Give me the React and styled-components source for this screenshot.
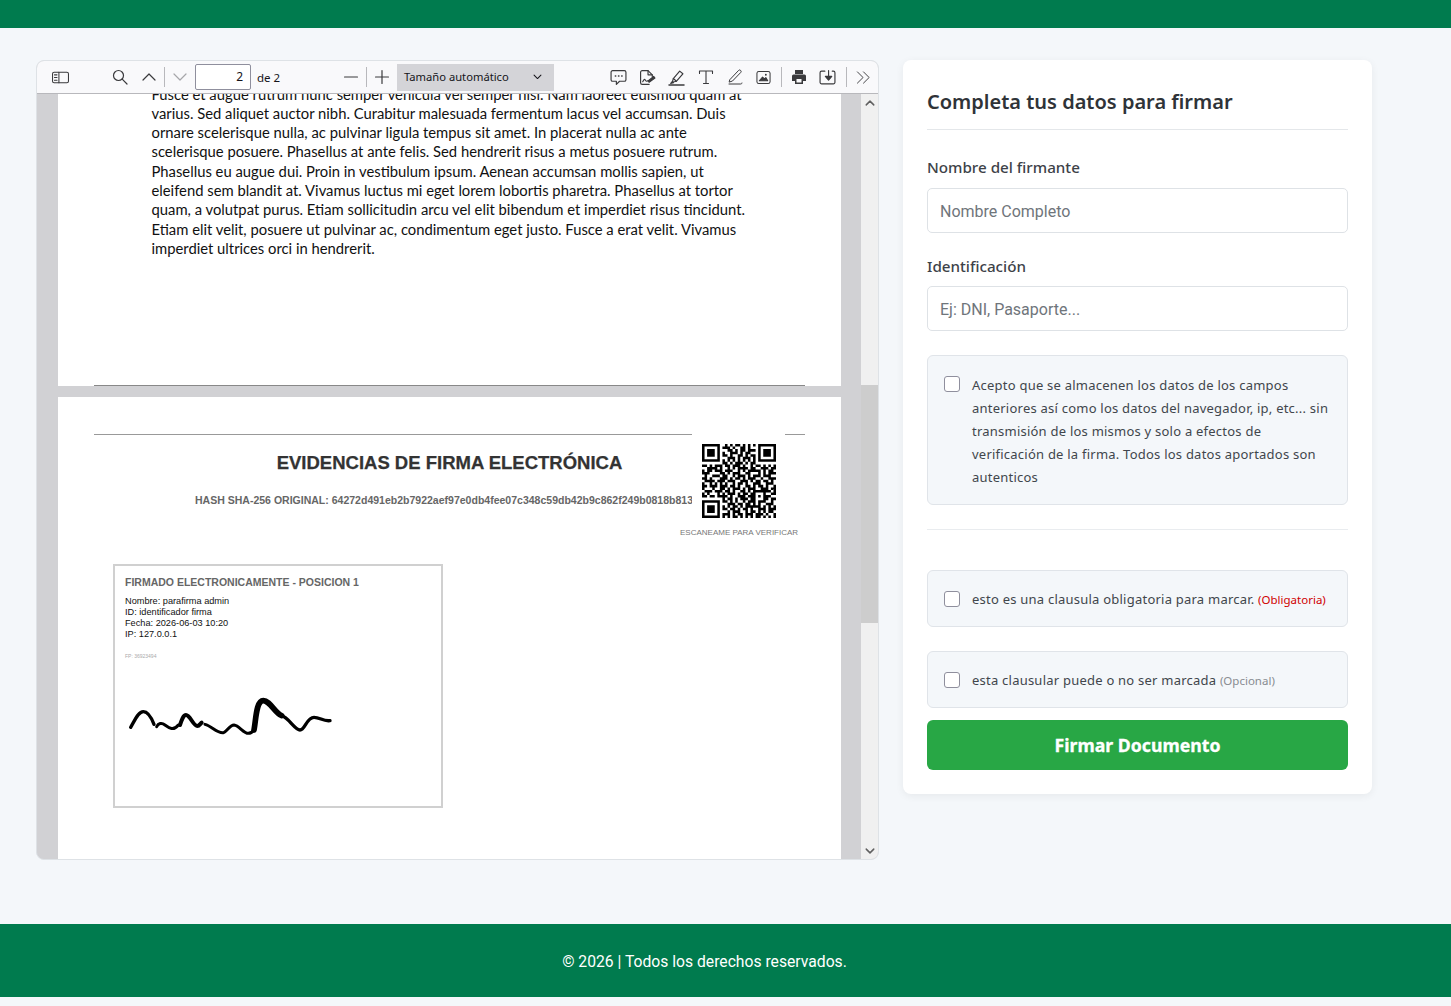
import React from 'react';
import styled, { createGlobalStyle } from 'styled-components';

const GlobalStyle = createGlobalStyle`
  html, body { margin: 0; padding: 0; background: #f4f7fa; }
  body { font-family: "Noto Sans", "Open Sans", sans-serif; color: #333; }
  * { box-sizing: border-box; }
`;

const TopBar = styled.header`
  height: 28px;
  background: #007b4e;
`;

const Main = styled.main`
  display: flex;
  align-items: flex-start;
  gap: 24px;
  padding: 32px 36px 64px;
`;

const Viewer = styled.section`
  width: 843px;
  height: 800px;
  display: flex;
  flex-direction: column;
  border: 1px solid #dee2e6;
  border-radius: 8px;
  overflow: hidden;
  background: #d1d1d4;
`;

const Toolbar = styled.div`
  height: 33px;
  flex: none;
  display: flex;
  align-items: center;
  padding-left: 9px;
  background: #f9f9fb;
  border-bottom: 1px solid #b8b8bc;
  color: #3a3a3d;
`;

const ToolButton = styled.button`
  width: 29px;
  height: 26px;
  flex: none;
  display: flex;
  align-items: center;
  justify-content: center;
  padding: 0;
  margin-left: ${({ $gap }) => $gap || 0}px;
  border: 0;
  background: none;
  color: ${({ $off }) => ($off ? '#a6a6aa' : '#3a3a3d')};
`;

const ToolSep = styled.span`
  width: 1px;
  height: 20px;
  flex: none;
  margin: 0 ${({ $mr }) => $mr || 0}px 0 ${({ $ml }) => $ml || 0}px;
  background: #b8b8bc;
`;

const PageInput = styled.div`
  width: 56px;
  height: 26px;
  flex: none;
  margin-left: 1px;
  padding-right: 7px;
  border: 1px solid #8f8f9d;
  border-radius: 2px;
  background: #fff;
  font-size: 12px;
  line-height: 24px;
  text-align: right;
  color: #15141a;
`;

const PageCount = styled.span`
  margin: 0 55px 0 6px;
  width: 24px;
  flex: none;
  font-size: 11.5px;
  white-space: nowrap;
  color: #15141a;
`;

const ZoomSelect = styled.div`
  width: 157px;
  height: 27px;
  flex: none;
  display: flex;
  align-items: center;
  justify-content: space-between;
  padding: 0 11px 1px 7px;
  margin: 0 50px 0 1px;
  background: #d4d4d8;
  font-size: 11.2px;
  white-space: nowrap;
  color: #15141a;
`;

const ViewerBody = styled.div`
  flex: 1;
  min-height: 0;
  display: flex;
`;

const DocScroll = styled.div`
  flex: 1;
  min-width: 0;
  padding-left: 21px;
  overflow: hidden;
`;

const Page = styled.div`
  position: relative;
  width: 783px;
  height: ${({ $h }) => $h}px;
  margin-bottom: 11px;
  background: #fff;
  overflow: hidden;
`;

const BodyText = styled.div`
  margin: -9.5px 0 0 93.5px;
  font-family: Lato, "Liberation Sans", sans-serif;
  font-size: 14.8px;
  line-height: 19.3px;
  color: #111;
  white-space: nowrap;
`;

const Line = styled.span`
  display: block;
`;

const PageRule = styled.div`
  position: absolute;
  left: 36px;
  right: 36px;
  bottom: 0;
  height: 1px;
  background: #888;
`;

const Evidence = styled.div`
  position: relative;
  margin: 37px 36px 0;
  height: 120px;
  border-top: 1px solid #999;
  font-family: "Liberation Sans", Arial, sans-serif;
`;

const EvTitle = styled.h2`
  margin: 17px 0 0;
  font-size: 18.5px;
  line-height: 22px;
  font-weight: 700;
  text-align: center;
  -webkit-text-stroke: 0.25px #333;
  color: #333;
`;

const EvHash = styled.div`
  margin: 19px 0 1px 101px;
  font-size: 10.53px;
  line-height: 14px;
  font-weight: 700;
  white-space: nowrap;
  color: #666;
`;

const QrStamp = styled.div`
  position: absolute;
  top: -2px;
  left: 598px;
  width: 93px;
  padding-top: 11px;
  background: #fff;
  display: flex;
  justify-content: center;
`;

const QrCaption = styled.div`
  position: absolute;
  top: 92px;
  left: 586px;
  font-size: 8px;
  line-height: 12px;
  white-space: nowrap;
  color: #777;
`;

const SigBox = styled.div`
  width: 330px;
  height: 244px;
  margin: 10px 0 0 55px;
  padding: 9px 10px;
  border: 2px solid #d0d0d0;
  font-family: "Liberation Sans", Arial, sans-serif;
`;

const SigTitle = styled.div`
  font-size: 10.5px;
  line-height: 14px;
  font-weight: 700;
  color: #666;
`;

const SigLines = styled.div`
  margin-top: 6.5px;
  font-size: 9.2px;
  line-height: 11px;
  color: #111;
`;

const SigPrint = styled.div`
  margin-top: 13.5px;
  font-size: 5px;
  line-height: 6px;
  color: #aaa;
`;

const SigDrawing = styled.svg`
  display: block;
  width: 230px;
  height: 70px;
  margin: 21px 0 0 -5px;
`;

const ScrollBar = styled.div`
  width: 17px;
  flex: none;
  display: flex;
  flex-direction: column;
  background: #f0f0f0;
  color: #606060;
`;

const ScrollArrow = styled.div`
  height: 17px;
  flex: none;
  display: flex;
  align-items: center;
  justify-content: center;
`;

const ScrollThumb = styled.div`
  height: 238px;
  margin-top: 274px;
  margin-bottom: auto;
  background: #cdcdcd;
`;

const Card = styled.aside`
  width: 469px;
  padding: 24px;
  background: #fff;
  border-radius: 8px;
  box-shadow: 0 2px 8px rgba(0, 0, 0, 0.06);
`;

const CardTitle = styled.h1`
  margin: 0;
  padding-bottom: 9px;
  font-size: 20px;
  line-height: 36px;
  font-weight: 600;
  color: #2f3338;
  border-bottom: 1px solid #e4e7ea;
`;

const Label = styled.label`
  display: block;
  margin: ${({ $top }) => $top}px 0 ${({ $bottom }) => $bottom}px;
  font-size: 15.2px;
  line-height: 24px;
  font-weight: 500;
  color: #3d4248;
`;

const TextInput = styled.input`
  display: block;
  width: 100%;
  height: 45px;
  padding: 2px 12px 0;
  border: 1px solid #dee2e6;
  border-radius: 5px;
  background: #fff;
  font-family: Roboto, sans-serif;
  font-size: 16px;
  &::placeholder { color: #6f757b; opacity: 1; }
`;

const ClauseBox = styled.label`
  display: flex;
  align-items: ${({ $top }) => ($top ? 'flex-start' : 'center')};
  gap: 12px;
  min-height: 57px;
  margin-top: ${({ $mt }) => $mt}px;
  padding: ${({ $top }) => ($top ? '18px 16px 15px' : '0 16px')};
  background: #f4f7fa;
  border: 1px solid #e0e4e9;
  border-radius: 6px;
`;

const Check = styled.span`
  width: 16px;
  height: 16px;
  flex: none;
  margin-top: ${({ $top }) => ($top ? '2px' : '0')};
  background: #fff;
  border: 1px solid #8f8f9d;
  border-radius: 3px;
`;

const ClauseText = styled.span`
  margin-top: ${({ $row }) => ($row ? '2px' : '0')};
  font-size: 13px;
  line-height: 23px;
  letter-spacing: 0.23px;
  color: #41464c;
`;

const Tag = styled.span`
  font-size: 11.5px;
  letter-spacing: 0;
  color: ${({ $red }) => ($red ? '#d00000' : '#888c91')};
`;

const Divider = styled.hr`
  margin: 24px 0 0;
  border: 0;
  border-top: 1px solid #e9ecef;
`;

const SignButton = styled.button`
  display: block;
  width: 100%;
  height: 50px;
  margin-top: 12px;
  border: 0;
  border-radius: 6px;
  background: #28a745;
  font-family: "Noto Sans", sans-serif;
  font-size: 17.7px;
  font-weight: 700;
  -webkit-text-stroke: 0.3px #fff;
  color: #fff;
`;

const Footer = styled.footer`
  height: 73px;
  padding: 2px 42px 0 0;
  display: flex;
  align-items: center;
  justify-content: center;
  background: #007b4e;
  font-family: Roboto, sans-serif;
  font-size: 15.7px;
  color: #fff;
`;

const Ico = ({ children, size = 16, sw = 1.2, w, h }) => (
  <svg width={w || size} height={h || size} viewBox="0 0 16 16" fill="none" stroke="currentColor" strokeWidth={sw} strokeLinecap="round" strokeLinejoin="round">
    {children}
  </svg>
);

const qrRows = [
  '#######..#.#.##.#.#.#.#######',
  '#.....#.###.#..##.#...#.....#',
  '#.###.#...##.#.##.###.#.###.#',
  '#.###.#.#..###.#.##...#.###.#',
  '#.###.#.##.#..##.#.##.#.###.#',
  '#.....#...###.#.###.#.#.....#',
  '#######.#.#.#.#.#.#.#.#######',
  '........##.#.###.#.##........',
  '##.#.###.##.###.#..#.##.#.#.#',
  '..####.#..#.#.####.##..###.##',
  '#.##.###.###..#.#.#####.#.##.',
  '###....##.#.###..##...#.#.###',
  '.#..###.##..#.###.#.###.###..',
  '##.#...###.#.##.#.###..#..###',
  '.####.###.###..###.#.##.##.#.',
  '#..#.#.#.#..#.##.#..###..###.',
  '##.###.###.##.#..##.#.##.#..#',
  '#...#..##.#.###.#.###..###.##',
  '.###.###.##.#..##.#.#######.#',
  '#.#...#.#.###.#.##.##...#..##',
  '##.##.####.#..###.###.#.###..',
  '........#.##.#.###.##...##.##',
  '#######.##.#.#..#.###.###..#.',
  '#.....#...###.##.##.#.#..###.',
  '#.###.#.#.#.##.#.######.#.#.#',
  '#.###.#.##.##.#.##.#..###.###',
  '#.###.#...#.###..#.##.#.#.##.',
  '#.....#.###.#.##.###.###.#..#',
  '#######.#.#.##.#.#.#.##.#.#.#',
];

const qrPath = qrRows
  .map((row, y) =>
    row.split('').map((c, x) => (c === '#' ? `M${x} ${y}h1v1h-1z` : '')).join('')
  )
  .join('');

const bodyLines = [
  'Fusce et augue rutrum nunc semper vehicula vel semper nisi. Nam laoreet euismod quam at',
  'varius. Sed aliquet auctor nibh. Curabitur malesuada fermentum lacus vel accumsan. Duis',
  'ornare scelerisque nulla, ac pulvinar ligula tempus sit amet. In placerat nulla ac ante',
  'scelerisque posuere. Phasellus at ante felis. Sed hendrerit risus a metus posuere rutrum.',
  'Phasellus eu augue dui. Proin in vestibulum ipsum. Aenean accumsan mollis sapien, ut',
  'eleifend sem blandit at. Vivamus luctus mi eget lorem lobortis pharetra. Phasellus at tortor',
  'quam, a volutpat purus. Etiam sollicitudin arcu vel elit bibendum et imperdiet risus tincidunt.',
  'Etiam elit velit, posuere ut pulvinar ac, condimentum eget justo. Fusce a erat velit. Vivamus',
  'imperdiet ultrices orci in hendrerit.',
];

export default function App() {
  return (
    <>
      <GlobalStyle />
      <TopBar />
      <Main>
        <Viewer>
          <Toolbar>
            <ToolButton>
              <Ico w={17} h={17} sw={1}>
                <rect x="0.5" y="3" width="15" height="10" rx="1.5" />
                <path d="M6.5 3v10M2.3 5.5h2.4M2.3 8h2.4M2.3 10.5h2.4" />
              </Ico>
            </ToolButton>
            <ToolButton $gap={30}>
              <Ico><circle cx="6.5" cy="6.5" r="5" /><path d="M10.2 10.2L15 15" /></Ico>
            </ToolButton>
            <ToolButton>
              <Ico><path d="M2 11l6-6 6 6" /></Ico>
            </ToolButton>
            <ToolSep $ml={1} />
            <ToolButton $off>
              <Ico><path d="M2 5l6 6 6-6" /></Ico>
            </ToolButton>
            <PageInput>2</PageInput>
            <PageCount>de 2</PageCount>
            <ToolButton>
              <Ico><path d="M1.5 8h13" /></Ico>
            </ToolButton>
            <ToolSep $ml={1} />
            <ToolButton>
              <Ico><path d="M1.5 8h13M8 1.5v13" /></Ico>
            </ToolButton>
            <ZoomSelect>
              Tamaño automático
              <Ico size={11} sw={1.5}><path d="M3 6l5 5 5-5" /></Ico>
            </ZoomSelect>
            <ToolButton>
              <Ico size={17} sw={1.1}>
                <path d="M2.5 1.5h11a1.5 1.5 0 0 1 1.5 1.5v7a1.5 1.5 0 0 1-1.5 1.5H9l-3 3v-3H2.5A1.5 1.5 0 0 1 1 10V3a1.5 1.5 0 0 1 1.5-1.5z" />
                <path d="M5 6.5h.4M8 6.5h.4M11 6.5h.4" strokeWidth="1.4" />
              </Ico>
            </ToolButton>
            <ToolButton>
              <Ico size={17} sw={1.1}>
                <path d="M9.5 14.5H3A1.5 1.5 0 0 1 1.5 13V3A1.5 1.5 0 0 1 3 1.5h5.5L12.5 5.5v1.5" />
                <path d="M8.5 1.5v4h4" />
                <path d="M3.5 12c1-2 2-3 2.5-1.5s1.5 1 2.5.5" />
                <path d="M9.5 12.5l5.5-4-1.2-1.5-5 4z" fill="currentColor" />
              </Ico>
            </ToolButton>
            <ToolButton>
              <Ico size={17} sw={1.1}>
                <path d="M1 15h14" strokeWidth="1.5" />
                <path d="M4 12.5l1-3.5 6-7 3 2.5-6 7z" />
                <path d="M5 9l3 2.5" />
                <path d="M2.5 13.5l1.5-1.5 1.2.9z" fill="currentColor" />
              </Ico>
            </ToolButton>
            <ToolButton>
              <Ico size={16} sw={1.1}>
                <path d="M1.5 4.5V2h13v2.5M8 2v12.5M5.5 14.5h5" />
              </Ico>
            </ToolButton>
            <ToolButton>
              <Ico size={16} sw={1}>
                <path d="M3 10.5L11.5 1.5a1.4 1.4 0 0 1 2.2 2L5.5 12 2.5 13z" />
                <path d="M2 15h11.5c1 0 1.5-.5 1.5-1" />
              </Ico>
            </ToolButton>
            <ToolButton>
              <Ico size={15} sw={1.1}>
                <rect x="1" y="1.5" width="14" height="13" rx="2" />
                <path d="M3.5 11.5L7 7.5l2 2 1.5-1.5 2 3.5z" fill="currentColor" />
                <circle cx="10.5" cy="5" r="1" fill="currentColor" stroke="none" />
              </Ico>
            </ToolButton>
            <ToolSep $ml={3} $mr={2} />
            <ToolButton>
              <Ico size={16} sw={0}>
                <path fillRule="evenodd" stroke="none" fill="currentColor" d="M4 1h8v4H4zM2.5 5.5h11A1.5 1.5 0 0 1 15 7v5h-3v3H4v-3H1V7a1.5 1.5 0 0 1 1.5-1.5zM5.5 10v3.5h5V10z" />
              </Ico>
            </ToolButton>
            <ToolButton>
              <Ico size={17} sw={1.1}>
                <path d="M5.5 2H2.5A1.5 1.5 0 0 0 1 3.5v9A1.5 1.500 0 0 0 2.5 14h11a1.5 1.5 0 0 0 1.5-1.5v-9A1.5 1.5 0 0 0 13.5 2h-1" />
                <path d="M9 1.5v8M6 7l3 3.5 3-3.5z" fill="currentColor" />
              </Ico>
            </ToolButton>
            <ToolSep $ml={4} $mr={2} />
            <ToolButton>
              <Ico size={15} sw={1}>
                <path d="M1.5 2l6 6-6 6M8 2l6 6-6 6" />
              </Ico>
            </ToolButton>
          </Toolbar>
          <ViewerBody>
            <DocScroll>
              <Page $h={292}>
                <BodyText>
                  {bodyLines.map((line) => <Line key={line}>{line}</Line>)}
                </BodyText>
                <PageRule />
              </Page>
              <Page $h={470}>
                <Evidence>
                  <EvTitle>EVIDENCIAS DE FIRMA ELECTRÓNICA</EvTitle>
                  <EvHash>HASH SHA-256 ORIGINAL: 64272d491eb2b7922aef97e0db4fee07c348c59db42b9c862f249b0818b813</EvHash>
                  <QrStamp>
                    <svg width="74" height="74" viewBox="0 0 29 29"><path d={qrPath} fill="#000" /></svg>
                  </QrStamp>
                  <QrCaption>ESCANEAME PARA VERIFICAR</QrCaption>
                </Evidence>
                <SigBox>
                  <SigTitle>FIRMADO ELECTRONICAMENTE - POSICION 1</SigTitle>
                  <SigLines>
                    <Line>Nombre: parafirma admin</Line>
                    <Line>ID: identificador firma</Line>
                    <Line>Fecha: 2026-06-03 10:20</Line>
                    <Line>IP: 127.0.0.1</Line>
                  </SigLines>
                  <SigPrint>FP: 36923494</SigPrint>
                  <SigDrawing viewBox="60 0 690 210" fill="none" stroke="#000" strokeLinecap="round" strokeLinejoin="round">
                    <path strokeWidth="10" d="M92 142C105 120 115 95 130 95C145 95 155 115 162 133" />
                    <path strokeWidth="9" d="M170 140C175 130 185 127 195 135C205 142 220 155 235 135" />
                    <path strokeWidth="12" d="M240 135C245 120 250 105 258 105C270 105 280 138 292 138C298 138 300 132 305 128" />
                    <path strokeWidth="9" d="M315 133C335 138 350 160 370 158C380 157 388 135 402 135C418 137 430 160 445 160C452 160 458 155 462 150" />
                    <path strokeWidth="17" d="M462 150C468 120 468 62 490 62C510 62 525 100 545 107" />
                    <path strokeWidth="10" d="M545 107C565 112 585 150 600 150C615 150 620 112 642 112C660 112 670 125 690 122" />
                  </SigDrawing>
                </SigBox>
              </Page>
            </DocScroll>
            <ScrollBar>
              <ScrollArrow>
                <Ico size={10} sw={2.4}><path d="M2 11l6-6 6 6" /></Ico>
              </ScrollArrow>
              <ScrollThumb />
              <ScrollArrow>
                <Ico size={10} sw={2.4}><path d="M2 5l6 6 6-6" /></Ico>
              </ScrollArrow>
            </ScrollBar>
          </ViewerBody>
        </Viewer>

        <Card>
          <CardTitle>Completa tus datos para firmar</CardTitle>
          <Label $top={25} $bottom={9}>Nombre del firmante</Label>
          <TextInput placeholder="Nombre Completo" />
          <Label $top={21} $bottom={8}>Identificación</Label>
          <TextInput placeholder="Ej: DNI, Pasaporte..." />
          <ClauseBox $top $mt={24}>
            <Check $top />
            <ClauseText>
              Acepto que se almacenen los datos de los campos anteriores así como los datos del navegador, ip, etc... sin transmisión de los mismos y solo a efectos de verificación de la firma. Todos los datos aportados son autenticos
            </ClauseText>
          </ClauseBox>
          <Divider />
          <ClauseBox $mt={40}>
            <Check />
            <ClauseText $row>esto es una clausula obligatoria para marcar. <Tag $red>(Obligatoria)</Tag></ClauseText>
          </ClauseBox>
          <ClauseBox $mt={24}>
            <Check />
            <ClauseText $row>esta clausular puede o no ser marcada <Tag>(Opcional)</Tag></ClauseText>
          </ClauseBox>
          <SignButton>Firmar Documento</SignButton>
        </Card>
      </Main>
      <Footer>© 2026 | Todos los derechos reservados.</Footer>
    </>
  );
}
